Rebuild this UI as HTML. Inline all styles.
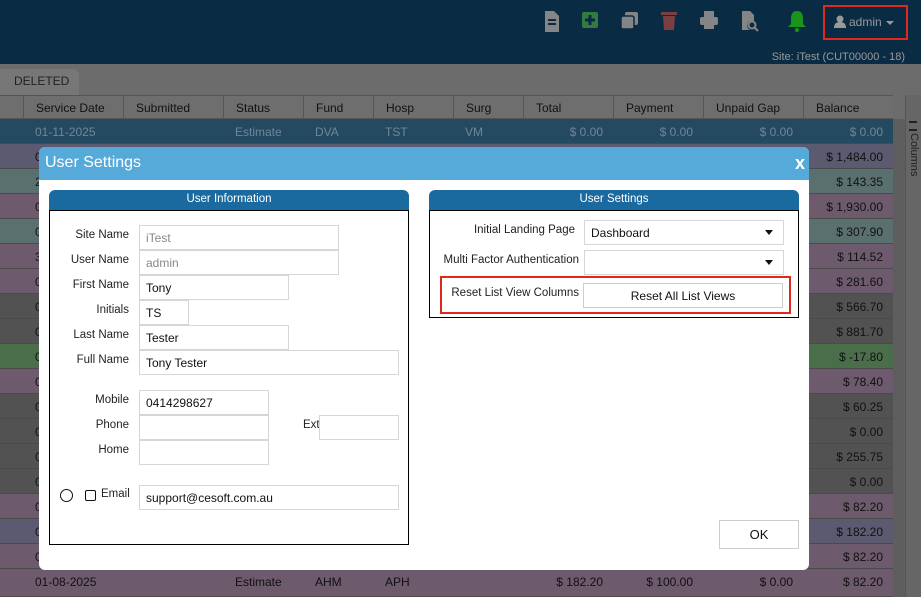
<!DOCTYPE html>
<html><head><meta charset="utf-8"><style>
*{box-sizing:border-box;margin:0;padding:0}
body{width:921px;height:597px;overflow:hidden;font-family:"Liberation Sans",sans-serif;font-size:12px;background:#6c6c6c;position:relative;color:#111}
.abs{position:absolute}
.top{left:0;top:0;width:921px;height:64px;background:#0a2b44}
.row{position:absolute;left:0;width:893px;height:25px;border-bottom:1px solid #4a4a4a}
.cell{position:absolute;top:6px;font-size:12px}
.hdr{left:0;top:95px;width:893px;height:24px;background:#6e6e6e;border-top:1px solid #555;border-bottom:1px solid #555}
.hdr span{position:absolute;top:5px;font-size:12px;color:#111}
.vl{position:absolute;top:0;width:1px;height:24px;background:#555}
.dlg{left:39px;top:147px;width:770px;height:423px;background:#fff;border-radius:6px;overflow:hidden}
.ttl{height:33px;background:#56aad9;color:#fff;font-size:16px;padding:7px 0 0 6px}
.ph{position:absolute;height:21px;background:#1a6aa0;color:#fff;text-align:center;font-size:11.5px;padding-top:3px;border-radius:6px 6px 0 0}
.pb{position:absolute;border:1px solid #000;background:#fff}
.lbl{position:absolute;font-size:11.5px;color:#222;text-align:right}
.in{position:absolute;border:1px solid #d6d6d6;height:25px;font-size:12px;padding:5px 6px;color:#111}
.g{color:#888}
.p{background:#6d5a6d}.b{background:#5b5a70}.t{background:#5a706e}.k{background:#525252}.gr{background:#4a6e4a}
</style></head><body>
<div class="abs top"></div>
<svg class="abs" style="left:540px;top:8px" width="280" height="28" viewBox="0 0 280 28">
 <g fill="#858585">
  <path d="M5 3h9l5 5v16H5z"/><rect x="8" y="11" width="8" height="2" fill="#0a2b44"/><rect x="8" y="15" width="8" height="2" fill="#0a2b44"/>
 </g>
 <rect x="42" y="4" width="16" height="16" rx="2" fill="#357a40"/><path d="M50 7v10M45 12h10" stroke="#0a2b44" stroke-width="3"/>
 <g fill="#858585"><rect x="85" y="4" width="13" height="13" rx="2"/><rect x="81" y="8" width="13" height="13" rx="2" stroke="#0a2b44" stroke-width="1.5"/></g>
 <g fill="#7a4040"><rect x="121" y="4" width="16" height="3"/><path d="M123 8h12l-1 14h-10z"/></g>
 <g fill="#858585"><rect x="164" y="3" width="10" height="6"/><rect x="160" y="9" width="18" height="8" rx="2"/><rect x="164" y="14" width="10" height="7"/></g>
 <g fill="#858585"><path d="M202 3h8l4 4v6h-4a5 5 0 0 0 0 9h-8z"/><circle cx="212" cy="17" r="3.5" fill="none" stroke="#858585" stroke-width="2"/><path d="M214 19l4 4" stroke="#858585" stroke-width="2"/></g>
 <path d="M257 3c-5 0-6 4-6 8v5l-3 3h18l-3-3v-5c0-4-1-8-6-8z" fill="#1a941a"/><circle cx="257" cy="22" r="2" fill="#1a941a"/>
</svg>
<div class="abs" style="left:823px;top:5px;width:85px;height:35px;border:2px solid #e0281e"></div>
<svg class="abs" style="left:834px;top:15px" width="12" height="13"><circle cx="6" cy="4" r="3.5" fill="#999"/><path d="M0 13c0-5 3-6 6-6s6 1 6 6z" fill="#999"/></svg>
<div class="abs" style="left:849px;top:15px;color:#999;font-size:12px">admin</div>
<div class="abs" style="left:886px;top:21px;border:4px solid transparent;border-top:4px solid #999"></div>
<div class="abs" style="left:760px;top:51px;color:#999;font-size:11px;width:145px;text-align:right">Site: iTest (CUT00000 - 18)</div>
<div class="abs" style="left:0;top:69px;width:79px;height:26px;background:#777;border-radius:0 6px 0 0;padding:5px 0 0 14px;font-size:12px;color:#222">DELETED</div>
<div class="abs hdr">
 <div class="vl" style="left:23px"></div><div class="vl" style="left:123px"></div><div class="vl" style="left:223px"></div><div class="vl" style="left:303px"></div><div class="vl" style="left:373px"></div><div class="vl" style="left:453px"></div><div class="vl" style="left:523px"></div><div class="vl" style="left:613px"></div><div class="vl" style="left:703px"></div><div class="vl" style="left:803px"></div>
 <span style="left:36px">Service Date</span><span style="left:136px">Submitted</span><span style="left:236px">Status</span><span style="left:316px">Fund</span><span style="left:386px">Hosp</span><span style="left:466px">Surg</span><span style="left:536px">Total</span><span style="left:626px">Payment</span><span style="left:716px">Unpaid Gap</span><span style="left:816px">Balance</span>
</div>
<div class="row" style="top:119px;background:#244a62;color:#6f8696">
 <span class="cell" style="left:35px">01-11-2025</span><span class="cell" style="left:235px">Estimate</span><span class="cell" style="left:315px">DVA</span><span class="cell" style="left:385px">TST</span><span class="cell" style="left:465px">VM</span>
 <span class="cell" style="left:523px;width:80px;text-align:right">$ 0.00</span><span class="cell" style="left:613px;width:80px;text-align:right">$ 0.00</span><span class="cell" style="left:703px;width:90px;text-align:right">$ 0.00</span><span class="cell" style="left:803px;width:80px;text-align:right">$ 0.00</span>
</div>
<div class="row b" style="top:144px"><span class="cell" style="left:35px">0</span><span class="cell" style="left:803px;width:80px;text-align:right">$ 1,484.00</span></div>
<div class="row t" style="top:169px"><span class="cell" style="left:35px">2</span><span class="cell" style="left:803px;width:80px;text-align:right">$ 143.35</span></div>
<div class="row p" style="top:194px"><span class="cell" style="left:35px">0</span><span class="cell" style="left:803px;width:80px;text-align:right">$ 1,930.00</span></div>
<div class="row t" style="top:219px"><span class="cell" style="left:35px">0</span><span class="cell" style="left:803px;width:80px;text-align:right">$ 307.90</span></div>
<div class="row p" style="top:244px"><span class="cell" style="left:35px">3</span><span class="cell" style="left:803px;width:80px;text-align:right">$ 114.52</span></div>
<div class="row p" style="top:269px"><span class="cell" style="left:35px">0</span><span class="cell" style="left:803px;width:80px;text-align:right">$ 281.60</span></div>
<div class="row k" style="top:294px"><span class="cell" style="left:35px">0</span><span class="cell" style="left:803px;width:80px;text-align:right">$ 566.70</span></div>
<div class="row k" style="top:319px"><span class="cell" style="left:35px">0</span><span class="cell" style="left:803px;width:80px;text-align:right">$ 881.70</span></div>
<div class="row gr" style="top:344px"><span class="cell" style="left:35px">0</span><span class="cell" style="left:803px;width:80px;text-align:right">$ -17.80</span></div>
<div class="row p" style="top:369px"><span class="cell" style="left:35px">0</span><span class="cell" style="left:803px;width:80px;text-align:right">$ 78.40</span></div>
<div class="row k" style="top:394px"><span class="cell" style="left:35px">0</span><span class="cell" style="left:803px;width:80px;text-align:right">$ 60.25</span></div>
<div class="row k" style="top:419px"><span class="cell" style="left:35px">0</span><span class="cell" style="left:803px;width:80px;text-align:right">$ 0.00</span></div>
<div class="row k" style="top:444px"><span class="cell" style="left:35px">0</span><span class="cell" style="left:803px;width:80px;text-align:right">$ 255.75</span></div>
<div class="row k" style="top:469px"><span class="cell" style="left:35px">0</span><span class="cell" style="left:803px;width:80px;text-align:right">$ 0.00</span></div>
<div class="row p" style="top:494px"><span class="cell" style="left:35px">0</span><span class="cell" style="left:803px;width:80px;text-align:right">$ 82.20</span></div>
<div class="row b" style="top:519px"><span class="cell" style="left:35px">0</span><span class="cell" style="left:803px;width:80px;text-align:right">$ 182.20</span></div>
<div class="row p" style="top:544px"><span class="cell" style="left:35px">0</span><span class="cell" style="left:803px;width:80px;text-align:right">$ 82.20</span></div>
<div class="row p" style="top:569px;height:28px"><span class="cell" style="left:35px">01-08-2025</span><span class="cell" style="left:235px">Estimate</span><span class="cell" style="left:315px">AHM</span><span class="cell" style="left:385px">APH</span><span class="cell" style="left:523px;width:80px;text-align:right">$ 182.20</span><span class="cell" style="left:613px;width:80px;text-align:right">$ 100.00</span><span class="cell" style="left:703px;width:90px;text-align:right">$ 0.00</span><span class="cell" style="left:803px;width:80px;text-align:right">$ 82.20</span></div>
<div class="abs" style="left:893px;top:119px;width:12px;height:478px;background:#5e5e5e"></div>
<div class="abs" style="left:905px;top:95px;width:16px;height:502px;background:#666;border-left:1px solid #555"></div>
<div class="abs" style="left:909px;top:121px;width:8px;height:10px;border-top:2px solid #222;border-bottom:2px solid #222"></div>
<div class="abs" style="font-size:11px;color:#222;transform:rotate(90deg);transform-origin:left top;left:920px;top:133px">Columns</div>

<div class="abs dlg">
 <div class="ttl">User Settings</div>
 <div class="abs" style="right:4px;top:6px;color:#fff;font-size:18px;font-weight:bold">x</div>
 <div class="ph" style="left:10px;top:43px;width:360px">User Information</div>
 <div class="pb" style="left:10px;top:63px;width:360px;height:335px"></div>
 <div class="ph" style="left:390px;top:43px;width:370px">User Settings</div>
 <div class="pb" style="left:390px;top:63px;width:370px;height:108px"></div>

 <div class="lbl" style="left:0;width:90px;top:82px">Site Name</div><div class="in g" style="left:100px;top:78px;width:200px">iTest</div>
 <div class="lbl" style="left:0;width:90px;top:107px">User Name</div><div class="in g" style="left:100px;top:103px;width:200px">admin</div>
 <div class="lbl" style="left:0;width:90px;top:132px">First Name</div><div class="in" style="left:100px;top:128px;width:150px">Tony</div>
 <div class="lbl" style="left:0;width:90px;top:157px">Initials</div><div class="in" style="left:100px;top:153px;width:50px">TS</div>
 <div class="lbl" style="left:0;width:90px;top:182px">Last Name</div><div class="in" style="left:100px;top:178px;width:150px">Tester</div>
 <div class="lbl" style="left:0;width:90px;top:207px">Full Name</div><div class="in" style="left:100px;top:203px;width:260px">Tony Tester</div>
 <div class="lbl" style="left:0;width:90px;top:247px">Mobile</div><div class="in" style="left:100px;top:243px;width:130px">0414298627</div>
 <div class="lbl" style="left:0;width:90px;top:272px">Phone</div><div class="in" style="left:100px;top:268px;width:130px"></div>
 <div class="lbl" style="left:0;width:90px;top:297px">Home</div><div class="in" style="left:100px;top:293px;width:130px"></div>
 <div class="lbl" style="left:264px;top:272px">Ext</div><div class="in" style="left:280px;top:268px;width:80px"></div>
 <div class="abs" style="left:21px;top:342px;width:13px;height:13px;border:1.5px solid #111;border-radius:50%"></div>
 <div class="abs" style="left:46px;top:343px;width:11px;height:11px;border:1px solid #111;border-radius:2px"></div>
 <div class="lbl" style="left:62px;top:341px">Email</div>
 <div class="in" style="left:100px;top:338px;width:260px">support@cesoft.com.au</div>

 <div class="lbl" style="left:390px;width:146px;top:77px">Initial Landing Page</div>
 <div class="in" style="left:545px;top:73px;width:200px">Dashboard</div>
 <div class="abs" style="left:726px;top:83px;border:4px solid transparent;border-top:5px solid #111"></div>
 <div class="lbl" style="left:390px;width:150px;top:107px">Multi Factor Authentication</div>
 <div class="in" style="left:545px;top:103px;width:200px"></div>
 <div class="abs" style="left:726px;top:113px;border:4px solid transparent;border-top:5px solid #111"></div>
 <div class="abs" style="left:401px;top:129px;width:351px;height:38px;border:2px solid #e0281e"></div>
 <div class="lbl" style="left:390px;width:150px;top:140px">Reset List View Columns</div>
 <div class="in" style="left:544px;top:136px;width:200px;text-align:center;border-color:#ccc">Reset All List Views</div>
 <div class="in" style="left:680px;top:373px;width:80px;height:29px;text-align:center;font-size:13px;padding-top:6px;border-color:#ccc">OK</div>
</div>
</body></html>
